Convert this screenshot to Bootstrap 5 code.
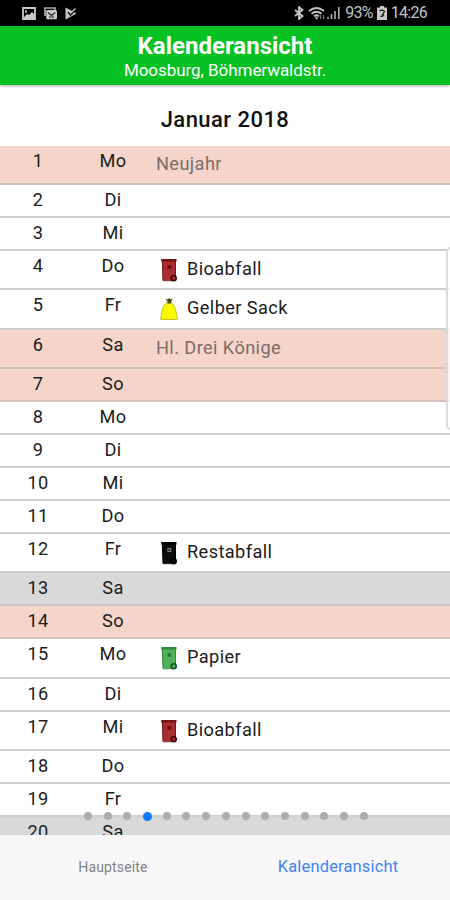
<!DOCTYPE html>
<html lang="de">
<head>
<meta charset="utf-8">
<meta name="viewport" content="width=device-width, initial-scale=1">
<title>Kalenderansicht</title>
<link rel="stylesheet" href="https://cdn.jsdelivr.net/npm/bootstrap@5.3.0/dist/css/bootstrap.min.css">
<style>
body{font-family:Roboto,sans-serif;color:#1c1c1c;letter-spacing:.3px}
.app{height:900px;width:450px}
.status{height:26px;background:#000;color:#c4c4c4;padding:0 23px 0 22px;font-size:16px;letter-spacing:-.8px}
.status .clock{margin-left:4px;letter-spacing:-.7px}
.appbar{height:59px;background:#06c122;padding-top:7px;box-shadow:0 1px 3px rgba(0,0,0,.35);z-index:2}
.appbar h1{font-size:24px;line-height:27px;font-weight:700;letter-spacing:0}
.appbar p{font-size:17px;line-height:20px;letter-spacing:-.05px;font-weight:400}
.month{height:60.7px;font-size:22px;line-height:69px;font-weight:500;color:#111;letter-spacing:.45px}
.day{height:33.03px;border-bottom:2px solid #cfcfcf;font-size:18.2px;line-height:22px;padding-top:4px}
.tall{height:39.34px}
.first{height:39.3px}
.holiday{background:#f5d5ca;border-color:#d3c1bd}
.weekend{background:#d9d9d9;border-color:#cbc3c2}
.num{width:76px}
.wd{width:74px}
.entry{padding-top:3px;padding-left:10px;gap:9px;letter-spacing:.4px}
.note{padding-top:3px;padding-left:6px;color:#7b6d69;letter-spacing:.4px}
.bin{width:18px;height:24px}
.red{--c:#a92e31;--d:#741518;--k:#3c080a}
.green{--c:#50b15a;--d:#2f893a;--k:#16561f}
.black{--c:#0c0c0c;--d:#000;--k:#000;--m:#777}
.dots{left:84px;top:812px;gap:11.7px;z-index:3}
.dots i{width:8px;height:8px;background:#adadad}
.dots i.on{width:9px;height:9px;background:#0a7aff;margin:-.5px}
.thumb{right:-6px;top:247px;width:10px;height:183px;border:2px solid #dcdcdc;border-radius:6px;background:rgba(255,255,255,.75)}
.tabs{height:65px;background:#f7f7f7;z-index:2}
.tabs a{font-size:14px;color:#828282;width:50%;letter-spacing:.15px;padding-left:1px}
.tabs a.current{font-size:16.5px;color:#4183f5}
</style>
<script src="https://cdn.jsdelivr.net/npm/bootstrap@5.3.0/dist/js/bootstrap.bundle.min.js"></script>
</head>
<body>
<svg class="d-none" xmlns="http://www.w3.org/2000/svg">
<symbol id="bin" viewBox="0 0 18 24"><path d="M2 2h14v20H3z" fill="var(--c)"/><path d="M1.2 1h15.3v2.6H1.2z" fill="var(--d)"/><path d="M2.4 3.5L3 22.7h9M15.5 3.5v15" fill="none" stroke="var(--d)"/><path d="M7.3 7h4v4h-4z" fill="var(--m,var(--d))"/><path d="M8.5 8.3h1.5v1.5H8.5z" fill="var(--k)"/><circle cx="13.7" cy="20.3" r="2.5" fill="var(--c)" stroke="var(--k)" stroke-width="1.6"/></symbol>
<symbol id="sack" viewBox="0 0 18 24"><path d="M7.2 5.5C4 7.5 2 11 1.6 16L.5 22.2q8.5 1 17 0L16.300 16C15.5 10.5 13.5 7 10.8 5.5z" fill="#fbf900" stroke="#a5a51c" stroke-width=".7"/><path d="M5.5 1.800l2.500.6 1.200-1.600 1 1.500 2.300-.8-1.300 3.200v1.700H7.500V4.500z" fill="#4b4a10"/></symbol>
</svg>
<div class="app d-flex flex-column position-relative overflow-hidden bg-white">
<div class="status d-flex align-items-center justify-content-between flex-shrink-0">
<div class="d-flex align-items-center gap-2">
<svg width="14" height="13" viewBox="0 0 14 13"><path d="M1 1h12v11H1z" fill="none" stroke="#c8c8c8" stroke-width="1.8"/><path d="M2 10l3-3 2 1 3-3 3 3v3H2z" fill="#c8c8c8"/><path d="M4 3v3" stroke="#c8c8c8" stroke-width="1.5"/></svg>
<svg width="13" height="13" viewBox="0 0 13 13"><path d="M1 9V1h10v2" fill="none" stroke="#aaa" stroke-width="1.7"/><rect x="2.2" y="3" width="10.8" height="9.3" rx="1.5" fill="#c8c8c8"/><path d="M4 5.500l3.600 3 3.600-3M5 10h5" fill="none" stroke="#222" stroke-width="1.1"/></svg>
<svg width="12" height="13" viewBox="0 0 12 13"><path d="M.5.500L11.500 6.500.5 12.500z" fill="#c8c8c8"/><path d="M3 5l2.500 3L11 2" fill="none" stroke="#111" stroke-width="1.5"/><path d="M5 6.500L10.500 1.500" stroke="#c8c8c8" stroke-width="1.2"/></svg>
</div>
<div class="d-flex align-items-center">
<svg width="10" height="14" viewBox="0 0 10 14" class="me-1"><path d="M1 4l7.500 6L5 13V1l3.500 3L1 10" fill="none" stroke="#c8c8c8" stroke-width="1.8"/></svg>
<svg width="18" height="13" viewBox="0 0 18 13"><path d="M1 4q7.500-6 15 0M3.500 6.700q5-4 10 0M6 9.200q2.500-2 5 0" fill="none" stroke="#c0c0c0" stroke-width="1.9"/><circle cx="8.5" cy="11" r="1.2" fill="#c0c0c0"/><path d="M12.500 8v4M15.500 8v4" stroke="#777" stroke-width="1.3"/></svg>
<svg width="15" height="14" viewBox="0 0 15 14" class="me-1"><path d="M2 11v2M5.500 8v5M9 5v8M12.800 1v12" stroke="#b8b8b8" stroke-width="1.5"/></svg>
<span class="pct">93%</span>
<svg width="10" height="14" viewBox="0 0 10 14" class="ms-1"><path d="M3 0h4v1.500h3V14H0V1.500h3z" fill="#c8c8c8"/><path d="M2.500 5q3.500-2 5 .5L5 9M6.800 8.500q-1 2.500-3.500 1.500" fill="none" stroke="#111" stroke-width="1.2"/></svg>
<span class="clock">14:26</span>
</div>
</div>
<header class="appbar text-white text-center flex-shrink-0 position-relative"><h1 class="m-0"><span>Kalenderansicht</span></h1><p class="m-0"><span>Moosburg, Böhmerwaldstr.</span></p></header>
<main class="flex-grow-1 overflow-hidden">
<h2 class="month m-0 text-center"><span>Januar 2018</span></h2>
<div class="day tall first holiday d-flex text-center"><span class="num">1</span><span class="wd">Mo</span><span class="note">Neujahr</span></div>
<div class="day d-flex text-center"><span class="num">2</span><span class="wd">Di</span></div>
<div class="day d-flex text-center"><span class="num">3</span><span class="wd">Mi</span></div>
<div class="day tall d-flex text-center"><span class="num">4</span><span class="wd">Do</span><span class="entry d-flex"><svg class="bin red"><use href="#bin"/></svg><span>Bioabfall</span></span></div>
<div class="day tall d-flex text-center"><span class="num">5</span><span class="wd">Fr</span><span class="entry d-flex"><svg class="bin"><use href="#sack"/></svg><span>Gelber Sack</span></span></div>
<div class="day tall holiday d-flex text-center"><span class="num">6</span><span class="wd">Sa</span><span class="note">Hl. Drei Könige</span></div>
<div class="day holiday d-flex text-center"><span class="num">7</span><span class="wd">So</span></div>
<div class="day d-flex text-center"><span class="num">8</span><span class="wd">Mo</span></div>
<div class="day d-flex text-center"><span class="num">9</span><span class="wd">Di</span></div>
<div class="day d-flex text-center"><span class="num">10</span><span class="wd">Mi</span></div>
<div class="day d-flex text-center"><span class="num">11</span><span class="wd">Do</span></div>
<div class="day tall d-flex text-center"><span class="num">12</span><span class="wd">Fr</span><span class="entry d-flex"><svg class="bin black"><use href="#bin"/></svg><span>Restabfall</span></span></div>
<div class="day weekend d-flex text-center"><span class="num">13</span><span class="wd">Sa</span></div>
<div class="day holiday d-flex text-center"><span class="num">14</span><span class="wd">So</span></div>
<div class="day tall d-flex text-center"><span class="num">15</span><span class="wd">Mo</span><span class="entry d-flex"><svg class="bin green"><use href="#bin"/></svg><span>Papier</span></span></div>
<div class="day d-flex text-center"><span class="num">16</span><span class="wd">Di</span></div>
<div class="day tall d-flex text-center"><span class="num">17</span><span class="wd">Mi</span><span class="entry d-flex"><svg class="bin red"><use href="#bin"/></svg><span>Bioabfall</span></span></div>
<div class="day d-flex text-center"><span class="num">18</span><span class="wd">Do</span></div>
<div class="day d-flex text-center"><span class="num">19</span><span class="wd">Fr</span></div>
<div class="day weekend d-flex text-center"><span class="num">20</span><span class="wd">Sa</span></div>
</main>
<nav class="tabs d-flex align-items-center text-center flex-shrink-0"><a class="text-decoration-none">Hauptseite</a><a class="current text-decoration-none">Kalenderansicht</a></nav>
<div class="dots position-absolute d-flex"><i class="rounded-circle"></i><i class="rounded-circle"></i><i class="rounded-circle"></i><i class="rounded-circle on"></i><i class="rounded-circle"></i><i class="rounded-circle"></i><i class="rounded-circle"></i><i class="rounded-circle"></i><i class="rounded-circle"></i><i class="rounded-circle"></i><i class="rounded-circle"></i><i class="rounded-circle"></i><i class="rounded-circle"></i><i class="rounded-circle"></i><i class="rounded-circle"></i></div>
<div class="thumb position-absolute"></div>
</div>
</body>
</html>
